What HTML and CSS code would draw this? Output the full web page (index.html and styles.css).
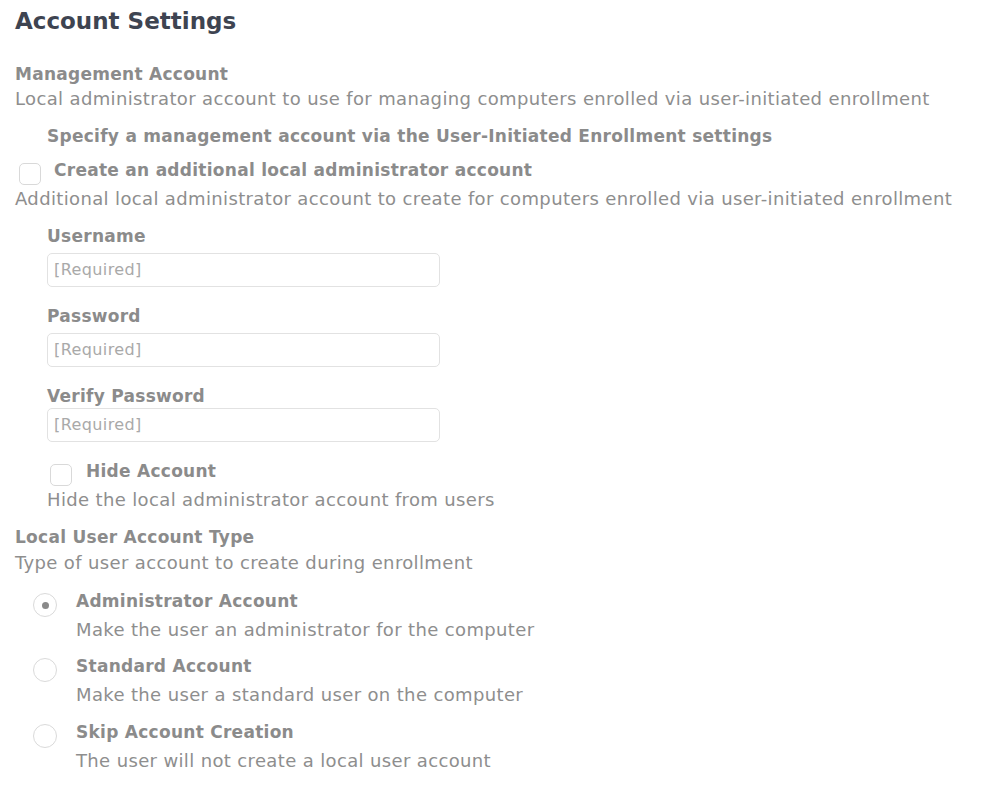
FILE: index.html
```html
<!DOCTYPE html>
<html>
<head>
<meta charset="utf-8">
<link rel="stylesheet" href="styles.css">
</head>
<body>
<div class="page">
  <h1 class="title">Account Settings</h1>

  <div class="label mgmt">Management Account</div>
  <div class="desc">Local administrator account to use for managing computers enrolled via user-initiated enrollment</div>

  <div class="label indent specify">Specify a management account via the User-Initiated Enrollment settings</div>

  <div class="check-row create">
    <span class="checkbox"></span>
    <span class="label">Create an additional local administrator account</span>
  </div>
  <div class="desc after-check">Additional local administrator account to create for computers enrolled via user-initiated enrollment</div>

  <div class="fields">
    <div class="field">
      <div class="label">Username</div>
      <div class="input">[Required]</div>
    </div>
    <div class="field">
      <div class="label">Password</div>
      <div class="input">[Required]</div>
    </div>
    <div class="field verify">
      <div class="label">Verify Password</div>
      <div class="input">[Required]</div>
    </div>
    <div class="check-row hide">
      <span class="checkbox"></span>
      <span class="label">Hide Account</span>
    </div>
    <div class="desc after-check">Hide the local administrator account from users</div>
  </div>

  <div class="label type">Local User Account Type</div>
  <div class="desc type-desc">Type of user account to create during enrollment</div>

  <div class="radios">
    <div class="radio-row first">
      <span class="radio checked"></span>
      <div class="radio-text">
        <div class="label">Administrator Account</div>
        <div class="desc">Make the user an administrator for the computer</div>
      </div>
    </div>
    <div class="radio-row">
      <span class="radio"></span>
      <div class="radio-text">
        <div class="label">Standard Account</div>
        <div class="desc">Make the user a standard user on the computer</div>
      </div>
    </div>
    <div class="radio-row last">
      <span class="radio"></span>
      <div class="radio-text">
        <div class="label">Skip Account Creation</div>
        <div class="desc">The user will not create a local user account</div>
      </div>
    </div>
  </div>
</div>
</body>
</html>
```

FILE: styles.css
```css
html, body {
  margin: 0;
  padding: 0;
  background: #ffffff;
}
body {
  font-family: "DejaVu Sans", Verdana, sans-serif;
  color: #8c8c8c;
}
.page {
  padding: 0 0 0 15px;
}
.title {
  margin: 0;
  padding-top: 5px;
  font-size: 23px;
  line-height: 32px;
  font-weight: bold;
  color: #3e4451;
}
.label {
  font-size: 17px;
  font-weight: bold;
  line-height: 24px;
  letter-spacing: 0.27px;
  color: #8b8b8b;
  white-space: nowrap;
}
.desc {
  font-size: 18px;
  line-height: 26px;
  letter-spacing: 0.36px;
  color: #8e8e8e;
  white-space: nowrap;
}
.mgmt {
  margin-top: 25px;
}
.indent {
  margin-left: 32px;
}
.specify {
  margin-top: 12px;
}
.check-row {
  display: flex;
  align-items: flex-start;
  height: 24px;
}
.create {
  margin-top: 10px;
}
.after-check {
  margin-top: 4px;
}
.checkbox {
  flex: none;
  width: 22px;
  height: 22px;
  margin-top: 5px;
  border: 1px solid #d9d9d9;
  border-radius: 5px;
  background: #fff;
  box-sizing: border-box;
}
.create .checkbox {
  margin-left: 4px;
  margin-right: 13px;
}
.fields {
  margin-left: 32px;
}
.field {
  margin-top: 17px;
}
.fields .field:first-child {
  margin-top: 12px;
}
.field .input {
  margin-top: 5px;
}
.verify .input {
  margin-top: 0;
}
.input {
  width: 393px;
  height: 34px;
  box-sizing: border-box;
  border: 1px solid #e2e2e2;
  border-radius: 5px;
  padding: 0 6px;
  font-size: 16px;
  line-height: 32px;
  letter-spacing: 0.4px;
  color: #a9a9a9;
}
.hide {
  margin-top: 17px;
}
.hide .checkbox {
  margin-left: 3px;
  margin-right: 14px;
}
.type {
  margin-top: 12px;
}
.type-desc {
  margin-top: 1px;
}
.radios {
  margin-left: 18px;
}
.radio-row {
  display: flex;
  align-items: flex-start;
  margin-top: 11px;
}
.radio-row.first {
  margin-top: 13px;
}
.radio-row.last {
  margin-top: 12px;
}
.radio {
  flex: none;
  width: 24px;
  height: 24px;
  box-sizing: border-box;
  border: 1px solid #dadada;
  border-radius: 50%;
  margin-top: 4px;
  margin-right: 19px;
  background: #fff;
  position: relative;
}
.radio.checked::after {
  content: "";
  position: absolute;
  left: 7.5px;
  top: 7.5px;
  width: 7px;
  height: 7px;
  border-radius: 50%;
  background: #8a8a8a;
}
.radio-text .desc {
  margin-top: 4px;
}
```
